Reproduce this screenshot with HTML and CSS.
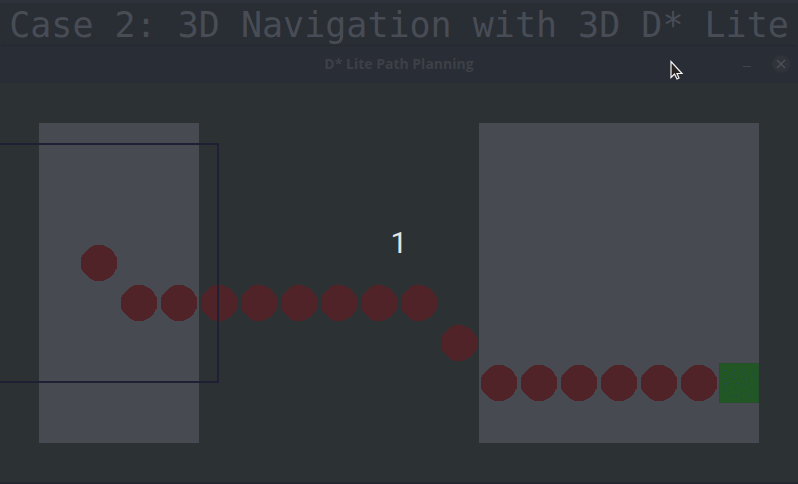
FILE: index.html
```
<!DOCTYPE html>
<html lang="en">
<head>
<meta charset="utf-8">
<title>D* Lite Path Planning</title>
<link rel="stylesheet" href="styles.css">
</head>
<body>
<header class="caption"><h1>Case 2: 3D Navigation with 3D D* Lite</h1></header>
<main class="window">
  <div class="titlebar">
    <h2>D* Lite Path Planning</h2>
    <div class="controls">
      <button type="button" aria-label="Minimize"><svg width="18" height="18" viewBox="0 0 18 18"><path d="M5 11.5h8" stroke="#41434a"/></svg></button>
      <button type="button" class="close" aria-label="Close"><svg width="18" height="18" viewBox="0 0 18 18"><path d="M5 5l8 8M13 5l-8 8" stroke="#4c4f58" stroke-width="1.5"/></svg></button>
    </div>
  </div>
  <svg class="map" viewBox="1 0 798 399">
    <defs>
      <path id="node" d="M-4-18H4L10-15 15-10 18-5V5L15 10 10 15 4 18H-4L-10 15-15 10-18 5V-5L-15-10-10-15Z"/>
    </defs>
    <path class="room" d="M40 40h160v320H40zM480 40h280v320H480z"/>
    <g class="path">
      <use href="#node" x="100" y="180"/>
      <use href="#node" x="140" y="220"/>
      <use href="#node" x="180" y="220"/>
      <use href="#node" x="220" y="220"/>
      <use href="#node" x="260" y="220"/>
      <use href="#node" x="300" y="220"/>
      <use href="#node" x="340" y="220"/>
      <use href="#node" x="380" y="220"/>
      <use href="#node" x="420" y="220"/>
      <use href="#node" x="460" y="260"/>
      <use href="#node" x="500" y="300"/>
      <use href="#node" x="540" y="300"/>
      <use href="#node" x="580" y="300"/>
      <use href="#node" x="620" y="300"/>
      <use href="#node" x="660" y="300"/>
      <use href="#node" x="700" y="300"/>
    </g>
    <path class="goal" d="M720 280h40v40h-40z"/>
    <g class="speckle">
      <path d="M725 287.500h33M728 291.500h30M725 295.500h32M727 300.500h16M725 307.500h8M726 313.500h14"/>
      <path d="M736 306l16-8M737 313l20-10M742 317l15-7M725 303l6-3"/>
    </g>
    <path class="goal-edge" d="M720.500 280.500h39v39h-39z"/>
    <path class="range" d="M0 61h219v238H0"/>
    <text x="400" y="170" text-anchor="middle">1</text>
  </svg>
</main>
<svg class="cursor" width="14" height="20" viewBox="0 0 14 20" aria-hidden="true"><path d="M1 1.500v16l3.500-3.500 2.500 5 2-1-2-4.500h5z" fill="#26221f" stroke="#f4f4f4" stroke-width="1.200"/></svg>
</body>
</html>
```
FILE: styles.css
```
* { box-sizing: border-box; }

body {
  margin: 0;
  min-height: 100vh;
  background: #292d34;
  overflow: hidden;
}

.caption {
  height: 45px;
  border-top: 3px solid #2e323b;
  text-align: center;
}

.caption h1 {
  margin: 0;
  font: 35px/44px "DejaVu Sans Mono", monospace;
  color: #484c55;
  white-space: nowrap;
}

.window {
  border-top: 1px dotted #1e2127;
  border-bottom: 2px solid #24272e;
  border-radius: 4px 4px 0 0;
  background: #2c3133;
}

.titlebar {
  display: grid;
  grid-template-columns: 1fr auto 1fr;
  align-items: center;
  height: 37px;
  padding-right: 8px;
  background: #292d35;
  border-bottom: 1px solid #282b30;
}

.titlebar h2 {
  grid-column: 2;
  margin: 0;
  padding-left: 8px;
  font: bold 14px/22px "Open Sans", sans-serif;
  color: #3e4047;
}

.controls {
  display: flex;
  justify-content: flex-end;
  gap: 16px;
}

.controls button {
  width: 18px;
  height: 18px;
  padding: 0;
  border: 0;
  border-radius: 50%;
  background: transparent;
}

.controls .close { background: #30333a; }

svg {
  display: block;
  fill: none;
}

.map { width: 100%; }
.room { fill: #474a50; }
.path { fill: #502329; shape-rendering: crispEdges; }
.goal { fill: #205725; }
.speckle { stroke: #24405a; stroke-dasharray: 1 4; }
.goal-edge { stroke: #2c4037; stroke-dasharray: 1 2; }
.range { stroke: #1f2033; stroke-width: 2; }

.map text {
  font: 30px Roboto, sans-serif;
  fill: #e4e4e4;
}

.cursor {
  position: absolute;
  top: 60px;
  left: 670px;
}
```
